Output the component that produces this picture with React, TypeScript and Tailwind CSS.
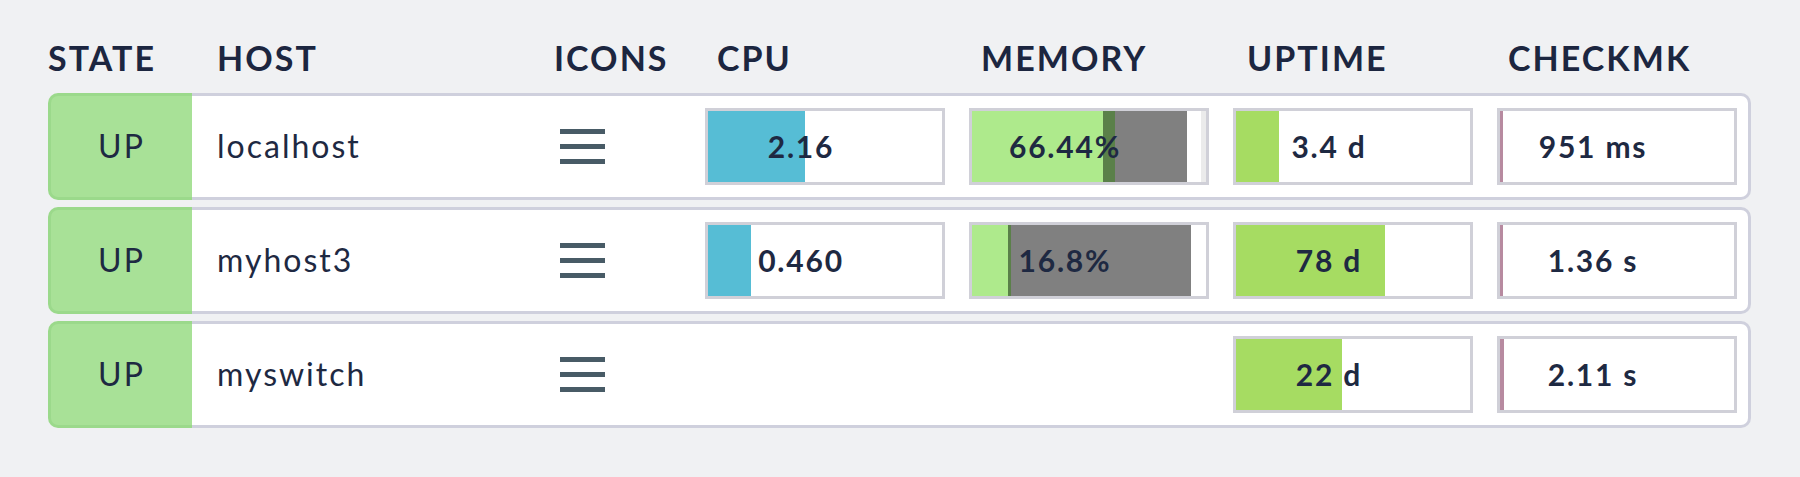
import React from "react";

// Perfometer segment
interface Seg {
  w: number;
  color: string;
}

interface Bar {
  label: string;
  segs: Seg[];
}

interface Host {
  name: string;
  cpu?: Bar;
  mem?: Bar;
  uptime: Bar;
  checkmk: Bar;
}

const hosts: Host[] = [
  {
    name: "localhost",
    cpu: { label: "2.16", segs: [{ w: 97, color: "#56bdd5" }] },
    mem: {
      label: "66.44%",
      segs: [
        { w: 131, color: "#aeea8c" },
        { w: 12, color: "#5a8049" },
        { w: 72, color: "#808080" },
        { w: 14, color: "#ffffff" },
        { w: 5, color: "#ebebeb" },
      ],
    },
    uptime: { label: "3.4 d", segs: [{ w: 43, color: "#a6dc62" }] },
    checkmk: { label: "951 ms", segs: [{ w: 3, color: "#b78aa0" }] },
  },
  {
    name: "myhost3",
    cpu: { label: "0.460", segs: [{ w: 43, color: "#56bdd5" }] },
    mem: {
      label: "16.8%",
      segs: [
        { w: 36, color: "#aeea8c" },
        { w: 3, color: "#5a8049" },
        { w: 180, color: "#808080" },
      ],
    },
    uptime: { label: "78 d", segs: [{ w: 149, color: "#a6dc62" }] },
    checkmk: { label: "1.36 s", segs: [{ w: 3, color: "#b78aa0" }] },
  },
  {
    name: "myswitch",
    uptime: { label: "22 d", segs: [{ w: 106, color: "#a6dc62" }] },
    checkmk: { label: "2.11 s", segs: [{ w: 4, color: "#b78aa0" }] },
  },
];

const Perfometer: React.FC<{ bar?: Bar }> = ({ bar }) => {
  if (!bar) return <div className="w-[240px] shrink-0" />;
  return (
    <div className="relative w-[240px] h-[77px] shrink-0 border-[3px] border-[#d0d0d8] bg-white flex">
      {bar.segs.map((s, i) => (
        <div key={i} className="h-full" style={{ width: s.w, backgroundColor: s.color }} />
      ))}
      <div className="absolute inset-y-0 left-0 right-[48px] flex items-center justify-center text-[30px] font-bold tracking-[1.8px] text-[#1e2942]">
        {bar.label}
      </div>
    </div>
  );
};

const Hamburger = () => (
  <div className="flex flex-col gap-[10px] w-[45px]">
    <div className="h-[5px] bg-[#485b66]" />
    <div className="h-[5px] bg-[#485b66]" />
    <div className="h-[5px] bg-[#485b66]" />
  </div>
);

export default function App() {
  return (
    <div
      className="min-h-[477px] bg-[#f0f1f3] pl-[48px] pt-[38px] text-[#1e2942]"
      style={{ fontFamily: "Lato, 'Noto Sans', sans-serif" }}
    >
      <div className="w-[1703px]">
        {/* Column headers */}
        <div className="flex text-[34px] font-bold uppercase tracking-[0.06em] leading-[1.2] text-[#1c2640]">
          <div className="w-[144px]">State</div>
          <div className="w-[356px] pl-[25px]">Host</div>
          <div className="w-[157px] pl-[6px]">Icons</div>
          <div className="w-[264px] pl-[12px]">CPU</div>
          <div className="w-[264px] pl-[12px]">Memory</div>
          <div className="w-[264px] pl-[14px]">Uptime</div>
          <div className="w-[240px] pl-[11px]">Checkmk</div>
        </div>

        <div className="mt-[14px] flex flex-col gap-[7px]">
          {hosts.map((h) => (
            <div key={h.name} className="flex h-[107px] text-[32px] tracking-[2px]">
              <div className="w-[144px] shrink-0 flex items-center justify-center bg-[#a8e197] border-y-[3px] border-l-[3px] border-[#9bd98b] rounded-l-[10px]">
                UP
              </div>
              <div className="flex-1 flex items-center bg-white border-y-[3px] border-r-[3px] border-[#cfd0dd] rounded-r-[10px]">
                <div className="w-[356px] shrink-0 pl-[25px]">{h.name}</div>
                <div className="w-[157px] shrink-0 pl-[12px]">
                  <Hamburger />
                </div>
                <div className="flex gap-[24px]">
                  <Perfometer bar={h.cpu} />
                  <Perfometer bar={h.mem} />
                  <Perfometer bar={h.uptime} />
                  <Perfometer bar={h.checkmk} />
                </div>
              </div>
            </div>
          ))}
        </div>
      </div>
    </div>
  );
}
